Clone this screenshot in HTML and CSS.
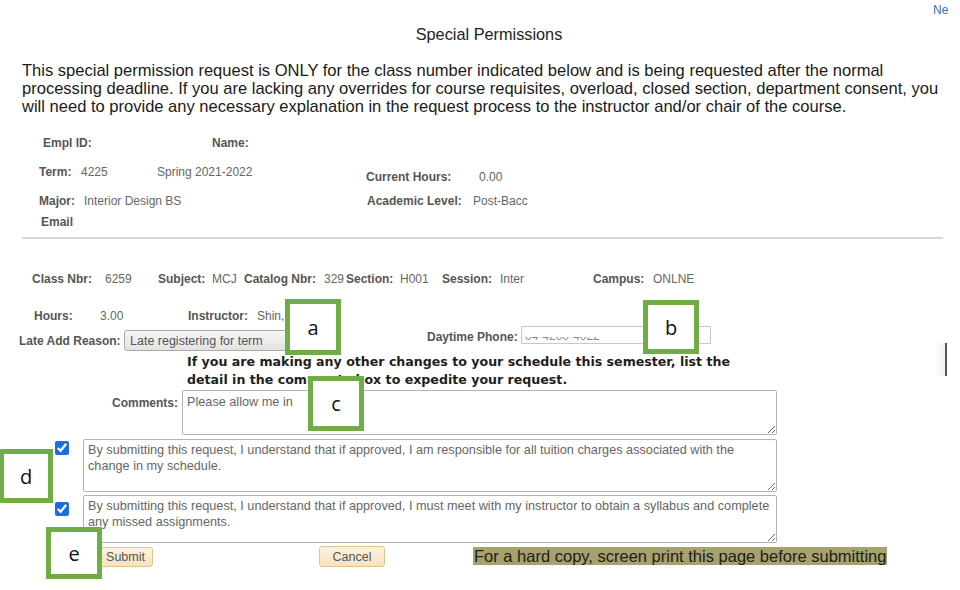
FILE: index.html
```html
<!DOCTYPE html>
<html lang="en">
<head>
    <meta charset="UTF-8" />
    <meta name="viewport" content="width=device-width, initial-scale=1.0" />
    <title>Special Permissions</title>
    <link rel="stylesheet" href="styles.css">
</head>
<body>

    <div class="top-link"><a href="#">Ne</a></div>

    <h1 class="title">Special Permissions</h1>

    <p class="intro">
        This special permission request is ONLY for the class number indicated below and is being requested after the normal<br>
        processing deadline. If you are lacking any overrides for course requisites, overload, closed section, department consent, you<br>
        will need to provide any necessary explanation in the request process to the instructor and/or chair of the course.
    </p>

    <div class="student">
        <div class="row row-empl">
            <span class="lbl w-empl">Empl ID:</span>
            <span class="lbl">Name:</span>
        </div>
        <div class="row row-term">
            <span class="lbl w-term">Term:</span>
            <span class="val w-termno">4225</span>
            <span class="val w-termname">Spring 2021-2022</span>
            <span class="lbl w-curhrs low">Current Hours:</span>
            <span class="val low">0.00</span>
        </div>
        <div class="row row-major">
            <span class="lbl w-major">Major:</span>
            <span class="val w-majorname">Interior Design BS</span>
            <span class="lbl w-level">Academic Level:</span>
            <span class="val">Post-Bacc</span>
        </div>
        <div class="row row-email">
            <span class="lbl">Email</span>
        </div>
    </div>

    <hr class="divider">

    <div class="class-info">
        <div class="row row-class">
            <span class="lbl w-classnbr">Class Nbr:</span>
            <span class="val w-classno">6259</span>
            <span class="lbl w-subject">Subject:</span>
            <span class="val w-subj">MCJ</span>
            <span class="lbl w-catalog">Catalog Nbr:</span>
            <span class="val w-catno">329</span>
            <span class="lbl w-section">Section:</span>
            <span class="val w-secno">H001</span>
            <span class="lbl w-session">Session:</span>
            <span class="val w-sess">Inter</span>
            <span class="lbl w-campus">Campus:</span>
            <span class="val">ONLNE</span>
        </div>
        <div class="row row-hours">
            <span class="lbl w-hours">Hours:</span>
            <span class="val w-hrs">3.00</span>
            <span class="lbl w-instr">Instructor:</span>
            <span class="val">Shin,</span>
        </div>
        <div class="row row-reason">
            <label class="lbl reason-lbl" for="late_reason">Late Add Reason:</label>
            <select id="late_reason" class="reason-select">
                <option>Late registering for term</option>
            </select>
            <label class="lbl phone-lbl" for="phone">Daytime Phone:</label>
            <div class="phone-box" id="phone"><span class="phone-text">04-4200-4022</span></div>
        </div>
    </div>

    <p class="note">
        If you are making any other changes to your schedule this semester, list the<br>
        detail in the comments box to expedite your request.
    </p>

    <div class="comments-row">
        <label class="lbl comments-lbl" for="comments">Comments:</label>
        <textarea id="comments" class="comments-box">Please allow me in</textarea>
    </div>

    <div class="ack-row ack-first">
        <input type="checkbox" checked />
        <textarea class="ack-box ack-tall">By submitting this request, I understand that if approved, I am responsible for all tuition charges associated with the
change in my schedule.</textarea>
    </div>

    <div class="ack-row ack-second">
        <input type="checkbox" checked />
        <textarea class="ack-box ack-short">By submitting this request, I understand that if approved, I must meet with my instructor to obtain a syllabus and complete
any missed assignments.</textarea>
    </div>

    <div class="actions">
        <button class="btn btn-submit">Submit</button>
        <button class="btn btn-cancel">Cancel</button>
        <span class="hint">For a hard copy, screen print this page before submitting</span>
    </div>

    <!-- annotation callouts drawn over the screenshot -->
    <div class="callout callout-a">a</div>
    <div class="callout callout-b">b</div>
    <div class="callout callout-c">c</div>
    <div class="callout callout-d">d</div>
    <div class="callout callout-e">e</div>

    <div class="edge-shadow"></div>

</body>
</html>
```

FILE: styles.css
```css
body {
    margin: 0;
    font-family: "Liberation Sans", Arial, sans-serif;
    background: #ffffff;
    color: #222;
    width: 960px;
    height: 590px;
    overflow: hidden;
    position: relative;
}

.top-link {
    padding: 3px 0 0 933px;
    height: 14px;
    line-height: 14px;
    font-size: 12px;
    white-space: nowrap;
}

    .top-link a {
        color: #3a6fb0;
        text-decoration: none;
    }

.title {
    margin: 7px 0 0 0;
    padding-left: 18px;
    text-align: center;
    font-size: 16.3px;
    font-weight: normal;
    line-height: 20px;
    color: #222;
}

.intro {
    margin: 18px 0 0 22px;
    font-size: 16.55px;
    line-height: 18px;
    white-space: nowrap;
    color: #1a1a1a;
}

/* field rows */
.row {
    display: flex;
    align-items: flex-start;
    height: 20px;
    line-height: 20px;
    font-size: 12px;
    white-space: nowrap;
}

.lbl {
    font-weight: bold;
    color: #555;
}

.val {
    color: #666;
}

.low {
    margin-top: 5px;
}

.student {
    margin-top: 17px;
}

.row-empl { padding-left: 43px; }
.row-term { padding-left: 39px; margin-top: 9px; }
.row-major { padding-left: 39px; margin-top: 9px; }
.row-email { padding-left: 41px; margin-top: 1px; }

.w-empl { width: 169px; }
.w-term { width: 42px; }
.w-termno { width: 76px; }
.w-termname { width: 209px; }
.w-curhrs { width: 113px; }
.w-major { width: 45px; }
.w-majorname { width: 283px; }
.w-level { width: 106px; }

.divider {
    margin: 5px 17px 0 22px;
    border: none;
    border-top: 2px solid #d6d6d6;
}

.class-info {
    margin-top: 30px;
}

.row-class { padding-left: 32px; }
.row-hours { padding-left: 34px; margin-top: 17px; }

.w-classnbr { width: 73px; }
.w-classno { width: 53px; }
.w-subject { width: 54px; }
.w-subj { width: 32px; }
.w-catalog { width: 80px; }
.w-catno { width: 22px; }
.w-section { width: 54px; }
.w-secno { width: 42px; }
.w-session { width: 58px; }
.w-sess { width: 93px; }
.w-campus { width: 60px; }
.w-hours { width: 66px; }
.w-hrs { width: 88px; }
.w-instr { width: 69px; }

.row-reason {
    height: 26px;
    padding-left: 19px;
}

.reason-lbl {
    margin-top: 5px;
    width: 105px;
}

.reason-select {
    appearance: none;
    margin: 4px 0 0 0;
    width: 178px;
    height: 21px;
    padding: 0 5px;
    border: 1px solid #a9a9a9;
    border-radius: 3px;
    background: linear-gradient(#f6f6f6, #e2e2e2);
    font-family: "Liberation Sans", Arial, sans-serif;
    font-size: 12.5px;
    color: #555;
}

.phone-lbl {
    margin: 1px 0 0 125px;
    width: 94px;
}

.phone-box {
    width: 190px;
    height: 18px;
    border: 1px solid #c8c8c8;
    line-height: 18px;
    padding-left: 3px;
    box-sizing: border-box;
    overflow: hidden;
}

.phone-text {
    display: inline-block;
    font-size: 12px;
    color: #888;
    clip-path: inset(55% 0 0 0);
}

.note {
    margin: 1px 0 0 187px;
    font-family: "DejaVu Sans", Verdana, sans-serif;
    font-weight: bold;
    font-size: 12.6px;
    line-height: 18px;
    white-space: nowrap;
    color: #1e1e1e;
}

/* text areas */
textarea {
    box-sizing: border-box;
    border: 1px solid #b4b4b4;
    border-radius: 2px;
    padding: 3px 4px;
    font-family: "Liberation Sans", Arial, sans-serif;
    font-size: 12.7px;
    line-height: 16px;
    color: #666;
    background: #fff;
    resize: both;
}

.comments-row {
    display: flex;
    align-items: flex-start;
    margin-top: 1px;
}

.comments-lbl {
    width: 178px;
    text-align: right;
    font-size: 12px;
    padding-top: 6px;
}

.comments-box {
    margin-left: 4px;
    width: 595px;
    height: 45px;
}

.ack-row {
    display: flex;
    align-items: flex-start;
}

    .ack-row input {
        margin: 2px 14px 0 55px;
        width: 14px;
        height: 14px;
        accent-color: #1a6fe0;
    }

.ack-first { margin-top: 4px; }
.ack-second { margin-top: 3px; }

    .ack-second input {
        margin-top: 7px;
    }

.ack-box {
    width: 694px;
    padding-top: 2px;
}

.ack-tall { height: 53px; }
.ack-short { height: 48px; }

.actions {
    display: flex;
    align-items: flex-start;
    margin-top: 4px;
    height: 22px;
}

.btn {
    height: 20px;
    padding: 0;
    border: 1px solid #e2c48e;
    border-radius: 3px;
    background: linear-gradient(#fdf3df, #f8e2bb);
    font-family: "Liberation Sans", Arial, sans-serif;
    font-size: 12.5px;
    color: #555;
}

.btn-submit {
    margin-left: 98px;
    width: 55px;
}

.btn-cancel {
    margin: -1px 0 0 166px;
    width: 66px;
    height: 21px;
}

.hint {
    margin-left: 88px;
    padding: 0 1px;
    background: #a6a26f;
    font-size: 16.5px;
    line-height: 18px;
    white-space: nowrap;
    color: #202010;
}

/* annotation overlays */
.callout {
    position: absolute;
    box-sizing: border-box;
    width: 56px;
    height: 55px;
    border: 5px solid #70ad47;
    background: #fff;
    display: flex;
    align-items: center;
    justify-content: center;
    font-family: "Open Sans", sans-serif;
    font-size: 20px;
    color: #111;
}

.callout-a { left: 285px; top: 299px; height: 56px; }
.callout-b { left: 643px; top: 300px; height: 54px; }
.callout-c { left: 308px; top: 376px; }
.callout-d { left: -1px; top: 449px; width: 54px; height: 54px; }
.callout-e { left: 46px; top: 527px; height: 52px; }

.edge-shadow {
    position: absolute;
    left: 935px;
    top: 343px;
    width: 10px;
    height: 33px;
    border-right: 2px solid #555;
    background: linear-gradient(to right, rgba(0,0,0,0), rgba(0,0,0,0.06));
}
```
